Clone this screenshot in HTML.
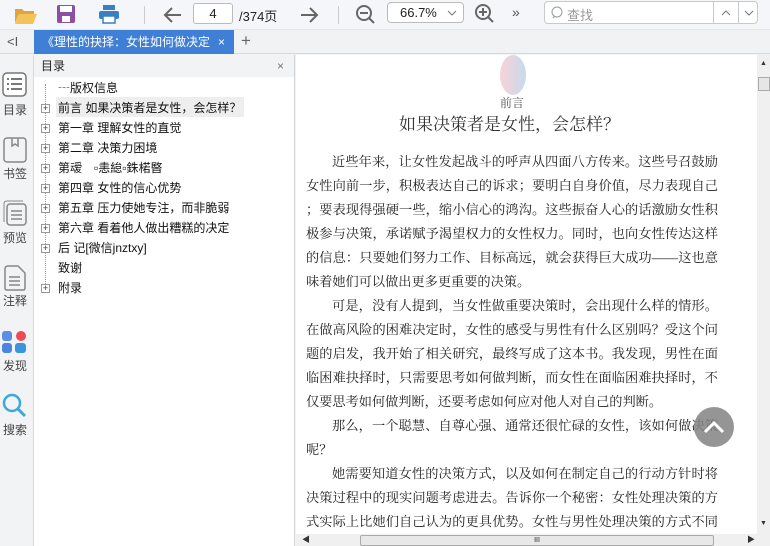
<!DOCTYPE html>
<html><head><meta charset="utf-8"><style>
*{margin:0;padding:0;box-sizing:border-box}
body{width:770px;height:546px;overflow:hidden;background:#f2f3f5;font-family:"Liberation Sans","Noto Sans CJK SC",sans-serif;position:relative;font-size:12px;color:#222}
.abs{position:absolute}
#tb{left:0;top:0;width:770px;height:30px;background:#f4f6f9;border-bottom:1px solid #e2e5ea}
#tabs{left:0;top:30px;width:770px;height:24px;background:#f1f2f4;border-bottom:1px solid #d6d8dc}
#tab{left:34px;top:30px;width:200px;height:24px;background:#3f7fd6;color:#fff;font-size:12px;line-height:24px;padding-left:8px;white-space:nowrap;overflow:hidden}
#side{left:0;top:55px;width:34px;height:491px;background:#f2f3f5;border-right:1px solid #d6d8dc}
.lab{position:absolute;left:0;width:30px;text-align:center;font-size:12px;color:#444}
#toc{left:34px;top:55px;width:261px;height:491px;background:#fff;border-right:1px solid #d0d2d6}
#toch{left:0;top:0;width:260px;height:22px;background:#f2f3f5;font-size:12px;line-height:22px;padding-left:7px;color:#222}
.it{position:absolute;left:24px;font-size:12px;line-height:16px;white-space:nowrap;color:#111}
.pl{position:absolute;left:7px;width:9px;height:9px;border:1px solid #999;background:#fff;font-size:9px;line-height:7px;text-align:center;color:#333}
#doc{left:296px;top:55px;width:461px;height:479px;background:#fff}
.ln{position:absolute;left:10px;width:412px;font-family:"Liberation Serif","Noto Serif CJK SC",serif;font-size:13.2px;line-height:16px;white-space:nowrap;color:#222;text-align:justify;text-align-last:justify}
.ln.i{left:36px;width:386px}
</style></head><body>
<div id="tb" class="abs">
 <svg class="abs" style="left:14px;top:5px" width="24" height="20"><path d="M1 4h7l2 2h10v3H5L1 18z" fill="#e0a53a"/><path d="M5 9h18l-4 10H1z" fill="#f3c35a"/></svg>
 <svg class="abs" style="left:56px;top:4px" width="20" height="20"><rect x="1" y="1" width="18" height="18" rx="2" fill="#8b4fa6"/><rect x="4" y="2" width="12" height="6" fill="#fff"/><rect x="6" y="12" width="8" height="6" fill="#fff"/></svg>
 <svg class="abs" style="left:98px;top:4px" width="22" height="20"><rect x="5" y="1" width="12" height="5" fill="#3a7fc4"/><rect x="1" y="7" width="20" height="8" rx="2" fill="#3a7fc4"/><rect x="5" y="12" width="12" height="7" fill="#fff" stroke="#3a7fc4" stroke-width="1.5"/></svg>
 <div class="abs" style="left:144px;top:6px;width:1px;height:18px;background:#ccc"></div>
 <svg class="abs" style="left:163px;top:6px" width="20" height="18"><path d="M18 9H3M9 2L2 9l7 7" stroke="#666" stroke-width="2" fill="none"/></svg>
 <div class="abs" style="left:193px;top:3px;width:40px;height:21px;border:1px solid #bbb;border-radius:3px;background:#fff;text-align:center;line-height:19px;font-size:13px">4</div>
 <div class="abs" style="left:239px;top:6px;font-size:13px">/374页</div>
 <svg class="abs" style="left:299px;top:6px" width="20" height="18"><path d="M2 9h15M11 2l7 7-7 7" stroke="#666" stroke-width="2" fill="none"/></svg>
 <div class="abs" style="left:338px;top:6px;width:1px;height:18px;background:#ccc"></div>
 <svg class="abs" style="left:355px;top:4px" width="22" height="22"><circle cx="9" cy="9" r="7" stroke="#666" stroke-width="2" fill="none"/><path d="M5 9h8M14 14l5 5" stroke="#666" stroke-width="2"/></svg>
 <div class="abs" style="left:387px;top:2px;width:77px;height:21px;border:1px solid #bbb;border-radius:4px;background:#fff;font-size:13px;line-height:19px;padding-left:12px">66.7%</div>
 <svg class="abs" style="left:447px;top:10px" width="10" height="6"><path d="M1 1l4 4 4-4" stroke="#777" fill="none"/></svg>
 <svg class="abs" style="left:474px;top:3px" width="22" height="22"><circle cx="9" cy="9" r="7" stroke="#666" stroke-width="2" fill="none"/><path d="M5 9h8M9 5v8M14 14l5 5" stroke="#666" stroke-width="2"/></svg>
 <div class="abs" style="left:512px;top:4px;font-size:14px;color:#555">»</div>
 <div class="abs" style="left:544px;top:1px;width:214px;height:23px;border:1px solid #c6c9ce;border-radius:4px;background:#fff"></div>
 <svg class="abs" style="left:550px;top:5px" width="16" height="16"><circle cx="7" cy="7" r="5" stroke="#999" fill="none"/><path d="M3 13l2-2" stroke="#999"/></svg>
 <div class="abs" style="left:567px;top:5px;font-size:13px;color:#999">查找</div>
 <div class="abs" style="left:713px;top:1px;width:1px;height:23px;background:#c6c9ce"></div>
 <div class="abs" style="left:738px;top:1px;width:1px;height:23px;background:#c6c9ce"></div>
 <svg class="abs" style="left:721px;top:10px" width="10" height="6"><path d="M1 5l4-4 4 4" stroke="#777" fill="none"/></svg>
 <svg class="abs" style="left:744px;top:10px" width="10" height="6"><path d="M1 1l4 4 4-4" stroke="#777" fill="none"/></svg>
</div>
<div id="tabs" class="abs"></div>
<div class="abs" style="left:7px;top:34px;font-size:13px;color:#555">&lt;I</div>
<div id="tab" class="abs">《理性的抉择：女性如何做决定<span style="position:absolute;left:182px;background:#3f7fd6;padding-left:2px">×</span></div>
<div class="abs" style="left:241px;top:31px;font-size:17px;color:#666">+</div>
<div id="side" class="abs">
 <svg class="abs" style="left:2px;top:17px" width="25" height="25"><rect x="1" y="1" width="23" height="23" rx="4" fill="#fff" stroke="#777" stroke-width="1.5"/><path d="M5 7h2M9 7h11M5 12h2M9 12h11M5 17h2M9 17h11" stroke="#666" stroke-width="1.8"/></svg>
 <div class="lab" style="top:46px">目录</div>
 <svg class="abs" style="left:3px;top:82px" width="24" height="26"><rect x="1" y="1" width="22" height="24" rx="3" fill="none" stroke="#888" stroke-width="1.5"/><path d="M9 1v8l3-2 3 2V1" stroke="#888" stroke-width="1.5" fill="none"/></svg>
 <div class="lab" style="top:110px">书签</div>
 <svg class="abs" style="left:2px;top:145px" width="25" height="26"><rect x="5" y="4" width="19" height="21" rx="3" fill="none" stroke="#888" stroke-width="1.5"/><path d="M2 22V4q0-3 3-3h16" stroke="#888" fill="none"/><path d="M9 11h11M9 15h11M9 19h11" stroke="#888" stroke-width="1.5"/></svg>
 <div class="lab" style="top:174px">预览</div>
 <svg class="abs" style="left:3px;top:210px" width="23" height="26"><path d="M2 4q0-3 3-3h10l7 7v15q0 2-2 2H4q-2 0-2-2z" fill="none" stroke="#888" stroke-width="1.5"/><path d="M6 12h11M6 16h11M6 20h11" stroke="#888" stroke-width="1.5"/></svg>
 <div class="lab" style="top:237px">注释</div>
 <svg class="abs" style="left:2px;top:274px" width="25" height="26"><rect x="0" y="2" width="10" height="10" rx="3" fill="#5b8fe6"/><circle cx="19" cy="7" r="5" fill="#ef4a55"/><rect x="0" y="14" width="10" height="10" rx="3" fill="#4a86e0"/><rect x="13" y="14" width="11" height="10" rx="3" fill="#3a95de"/></svg>
 <div class="lab" style="top:302px">发现</div>
 <svg class="abs" style="left:2px;top:338px" width="25" height="26"><circle cx="10" cy="10" r="8" fill="none" stroke="#3aa9e0" stroke-width="2.5"/><path d="M16 16l7 7" stroke="#3aa9e0" stroke-width="3"/></svg>
 <div class="lab" style="top:366px">搜索</div>
</div>
<div id="toc" class="abs">
 <div id="toch" class="abs">目录<span style="position:absolute;left:243px;color:#777">×</span></div>
 <div class="abs" style="left:11px;top:29px;height:206px;border-left:1px dotted #999"></div>
 <div class="abs" style="left:22px;top:42px;width:188px;height:20px;background:#eeeeee"></div>
 <div class="it" style="top:25px">┄版权信息</div>
 <div class="pl" style="top:49px">+</div><div class="it" style="top:45px">前言 如果决策者是女性，会怎样？</div>
 <div class="pl" style="top:69px">+</div><div class="it" style="top:65px">第一章 理解女性的直觉</div>
 <div class="pl" style="top:89px">+</div><div class="it" style="top:85px">第二章 决策力困境</div>
 <div class="pl" style="top:109px">+</div><div class="it" style="top:105px">第叆　▫恚緿▫銖楉暋</div>
 <div class="pl" style="top:129px">+</div><div class="it" style="top:125px">第四章 女性的信心优势</div>
 <div class="pl" style="top:149px">+</div><div class="it" style="top:145px">第五章 压力使她专注，而非脆弱</div>
 <div class="pl" style="top:169px">+</div><div class="it" style="top:165px">第六章 看着他人做出糟糕的决定</div>
 <div class="pl" style="top:189px">+</div><div class="it" style="top:185px">后 记[微信jnztxy]</div>
 <div class="it" style="top:205px">致谢</div>
 <div class="pl" style="top:229px">+</div><div class="it" style="top:225px">附录</div>
</div>
<div id="doc" class="abs">
 <div class="abs" style="left:204px;top:0;width:26px;height:40px;border-radius:50%;background:linear-gradient(90deg,#f8d3d6,#c8d9ee)"></div>
 <div class="abs" style="left:204px;top:39px;font-size:12px;color:#555;font-family:'Liberation Serif','Noto Serif CJK SC',serif">前言</div>
 <div class="abs" style="left:103px;top:55px;font-size:17px;color:#333;font-family:'Liberation Serif','Noto Serif CJK SC',serif;white-space:nowrap">如果决策者是女性，会怎样？</div>
 <div class="ln i" style="top:99px">近些年来，让女性发起战斗的呼声从四面八方传来。这些号召鼓励</div>
 <div class="ln" style="top:123px">女性向前一步，积极表达自己的诉求；要明白自身价值，尽力表现自己</div>
 <div class="ln" style="top:147px">；要表现得强硬一些，缩小信心的鸿沟。这些振奋人心的话激励女性积</div>
 <div class="ln" style="top:171px">极参与决策，承诺赋予渴望权力的女性权力。同时，也向女性传达这样</div>
 <div class="ln" style="top:195px">的信息：只要她们努力工作、目标高远，就会获得巨大成功——这也意</div>
 <div class="ln" style="top:219px;width:auto;text-align-last:auto">味着她们可以做出更多更重要的决策。</div>
 <div class="ln i" style="top:243px">可是，没有人提到，当女性做重要决策时，会出现什么样的情形。</div>
 <div class="ln" style="top:267px">在做高风险的困难决定时，女性的感受与男性有什么区别吗？受这个问</div>
 <div class="ln" style="top:291px">题的启发，我开始了相关研究，最终写成了这本书。我发现，男性在面</div>
 <div class="ln" style="top:315px">临困难抉择时，只需要思考如何做判断，而女性在面临困难抉择时，不</div>
 <div class="ln" style="top:339px;width:auto;text-align-last:auto">仅要思考如何做判断，还要考虑如何应对他人对自己的判断。</div>
 <div class="ln i" style="top:363px">那么，一个聪慧、自尊心强、通常还很忙碌的女性，该如何做决策</div>
 <div class="ln" style="top:387px;width:auto;text-align-last:auto">呢？</div>
 <div class="ln i" style="top:411px">她需要知道女性的决策方式，以及如何在制定自己的行动方针时将</div>
 <div class="ln" style="top:435px">决策过程中的现实问题考虑进去。告诉你一个秘密：女性处理决策的方</div>
 <div class="ln" style="top:459px">式实际上比她们自己认为的更具优势。女性与男性处理决策的方式不同</div>
 <div class="abs" style="left:398px;top:352px;width:40px;height:40px;border-radius:50%;background:rgba(130,130,130,.85)"></div>
 <svg class="abs" style="left:406px;top:362px" width="24" height="20"><path d="M3 15l9-9 9 9" stroke="#fff" stroke-width="3" fill="none"/></svg>
</div>
<div class="abs" style="left:757px;top:55px;width:13px;height:479px;background:#f0f0f0"></div>
<div class="abs" style="left:760px;top:60px;font-size:7px;color:#333">▲</div>
<div class="abs" style="left:758px;top:77px;width:12px;height:14px;background:#e6e6e6;border:1px solid #aaa"></div>
<div class="abs" style="left:760px;top:520px;font-size:7px;color:#333">▼</div>
<div class="abs" style="left:296px;top:534px;width:474px;height:12px;background:#f0f0f0"></div>
<div class="abs" style="left:302px;top:534px;font-size:8px;color:#333">◀</div>
<div class="abs" style="left:360px;top:535px;width:354px;height:11px;background:#e8e8e8;border:1px solid #aaa;border-radius:2px;text-align:center;font-size:7px;line-height:9px">III</div>
<div class="abs" style="left:747px;top:534px;font-size:8px;color:#333">▶</div>
</body></html>
